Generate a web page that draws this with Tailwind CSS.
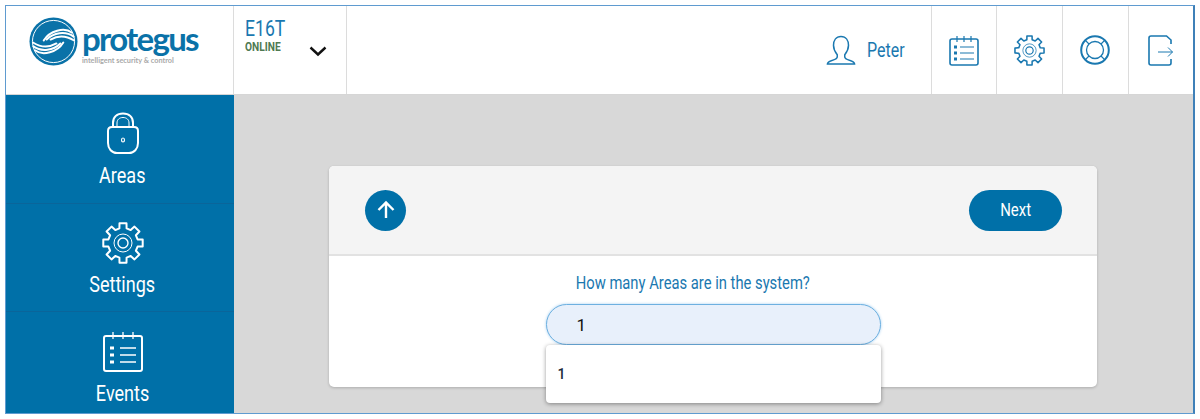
<!DOCTYPE html>
<html lang="en">
<head>
  <meta charset="UTF-8" />
  <title>Protegus - Areas</title>
  <script src="https://cdn.jsdelivr.net/npm/@tailwindcss/browser@4"></script>
</head>
<body class="bg-white w-[1200px] h-[419px] overflow-hidden font-['Roboto',sans-serif]">

<div class="mt-[5px] ml-[5px] w-[1190px] h-[409px] border border-r-2 border-[#5f9bd0] border-r-[#3f80b8] flex flex-col overflow-hidden">

  <!-- header -->
  <header class="h-[89px] shrink-0 flex bg-white border-b border-[#d6d6d6]">
    <div class="w-[228px] shrink-0 border-r border-[#dcdcdc] flex items-start pt-[11px] pl-[23px]">
      <svg class="w-[49px] h-[49px] shrink-0" viewBox="0 0 50 50">
        <circle cx="25" cy="25" r="24.5" fill="#0a72a8" />
        <circle cx="25" cy="25" r="21.5" fill="none" stroke="#fff" stroke-width="1" />
        <g fill="none" stroke="#fff" stroke-linecap="round">
          <path d="M15 24C21 14 36 10 44 16" stroke-width="2" />
          <path d="M18 23C25 16 37 14 45.5 20" stroke-width="2" />
          <path d="M22 23C29 19 38 19 46 24" stroke-width="2" />
          <g transform="rotate(180 25 25)">
            <path d="M15 24C21 14 36 10 44 16" stroke-width="2" />
            <path d="M18 23C25 16 37 14 45.5 20" stroke-width="2" />
            <path d="M22 23C29 19 38 19 46 24" stroke-width="2" />
          </g>
        </g>
      </svg>
      <div class="ml-[4px] mt-[6px]">
        <p class="font-['Lato',sans-serif] font-bold text-[33px] leading-[30px] tracking-[-1.7px] text-[#0a72a8]">protegus</p>
        <p class="font-['Lato',sans-serif] font-bold text-[7.3px] leading-[10px] text-[#a9a9a9] mt-[3px]">intelligent security &amp; control</p>
      </div>
    </div>
    <div class="w-[113px] shrink-0 border-r border-[#dcdcdc] flex pl-[11px] pt-[12px]">
      <div>
        <p class="text-[22px] leading-[21px] text-[#1a78b0] origin-left scale-x-[0.8]">E16T</p>
        <p class="text-[12px] leading-[14px] font-bold text-[#4f7a52] mt-[1px] origin-left scale-x-[0.85]">ONLINE</p>
      </div>
      <svg class="w-[18px] h-[12px] ml-auto mr-[19px] mt-[27px]" viewBox="0 0 18 12" fill="none" stroke="#111" stroke-width="2.4"><path d="M1.5 2.5L9 9.5L16.5 2.5" /></svg>
    </div>
    <div class="flex-1 flex items-center justify-end pr-[26px] gap-[11px]">
      <svg class="w-[30px] h-[30px] mt-[-1px]" viewBox="0 0 32 32" fill="none" stroke="#1a78b0" stroke-width="1.6"><path d="M16 1.5C10.5 1.5 8 6 8 11C8 15 9.5 18 12 21V23.5C12 25 10 26 7 27C3.5 28 1.5 29 1.5 31H30.5C30.5 29 28.5 28 25 27C22 26 20 25 20 23.5V21C22.5 18 24 15 24 11C24 6 21.5 1.5 16 1.5Z" /></svg>
      <p class="text-[20px] leading-none text-[#1a78b0] w-[38px] origin-left scale-x-[0.8]">Peter</p>
    </div>
    <div class="w-[65px] shrink-0 border-l border-[#dcdcdc] flex items-center justify-center">
      <svg class="w-[30px] h-[31px]" viewBox="0 0 30 31" fill="none" stroke="#1a78b0" stroke-width="1.6"><rect x="1" y="4" width="28" height="26" rx="2" /><path d="M8 1V7M15 1V7M22 1V7M11 12H25M11 18H25M11 24H25" stroke-width="1.2" /><path d="M5 12H8M5 18H8M5 24H8" stroke-width="2.8" /></svg>
    </div>
    <div class="w-[66px] shrink-0 border-l border-[#dcdcdc] flex items-center justify-center">
      <svg class="w-[31px] h-[31px]" viewBox="0 0 42 42" fill="none" stroke="#1a78b0" stroke-width="2.1"><path d="M17.5 1.3H24.5L24.6 6.4L28.7 8.1L32.5 4.6L37.4 9.5L33.9 13.3L35.6 17.4L40.7 17.5V24.5L35.6 24.6L33.9 28.7L37.4 32.5L32.5 37.4L28.7 33.9L24.6 35.6L24.5 40.7H17.5L17.4 35.6L13.3 33.9L9.5 37.4L4.6 32.5L8.1 28.7L6.4 24.6L1.3 24.5V17.5L6.4 17.4L8.1 13.3L4.6 9.5L9.5 4.6L13.3 8.1L17.4 6.4Z" stroke-linejoin="round" /><circle cx="21" cy="21" r="9" stroke-width="1" /><circle cx="21" cy="21" r="5" stroke-width="1.6" /></svg>
    </div>
    <div class="w-[66px] shrink-0 border-l border-[#dcdcdc] flex items-center justify-center">
      <svg class="w-[30px] h-[30px] mr-[2px]" viewBox="0 0 30 30" fill="none" stroke="#1a78b0"><circle cx="15" cy="15" r="13.8" stroke-width="2" /><circle cx="15" cy="15" r="8.5" stroke-width="1.3" /><path d="M9 9L5 5M21 9L25 5M9 21L5 25M21 21L25 25" stroke-width="1.1" /></svg>
    </div>
    <div class="w-[65px] shrink-0 border-l border-[#dcdcdc] flex items-center justify-center">
      <svg class="w-[25px] h-[31px] mr-[1px]" viewBox="0 0 25 31" fill="none" stroke="#1a78b0" stroke-width="1.6"><path d="M23 9V5L18.5 1H3C2 1 1 2 1 3V28C1 29 2 30 3 30H21C22 30 23 29 23 28V24" /><path d="M10 17H24.5M20 12.5L24.5 17L20 21.5" stroke-width="1" /></svg>
    </div>
  </header>

  <div class="flex-1 flex min-h-0">
    <!-- sidebar -->
    <nav class="w-[228px] shrink-0 bg-[#0070a8] flex flex-col text-white">
      <a class="h-[108px] shrink-0 flex flex-col items-center pt-[17px] pl-[5px]">
        <svg class="w-[32px] h-[42px]" viewBox="0 0 32 42" fill="none" stroke="#fff" stroke-width="2"><path d="M6 14V11C6 5 10 1.5 16 1.5C22 1.5 26 5 26 11V14" /><path d="M10 14V11C10 7.5 12.5 5.5 16 5.5C19.5 5.5 22 7.5 22 11V14" stroke-width="1" /><path d="M5 15H27C29.5 15 31 16.5 31 19V31C31 37 27 41 22 41H10C5 41 1 37 1 31V19C1 16.5 2.5 15 5 15Z" stroke-linejoin="round" /><ellipse cx="16" cy="28" rx="1.5" ry="2" stroke-width="1.2" /></svg>
        <span class="text-[22px] leading-[24px] mt-[10px] scale-x-[0.82]">Areas</span>
      </a>
      <a class="h-[108px] shrink-0 flex flex-col items-center pt-[18px] pl-[5px] border-t border-[#0a659a]">
        <svg class="w-[42px] h-[42px]" viewBox="0 0 42 42" fill="none" stroke="#fff" stroke-width="2"><path d="M17.5 1.3H24.5L24.6 6.4L28.7 8.1L32.5 4.6L37.4 9.5L33.9 13.3L35.6 17.4L40.7 17.5V24.5L35.6 24.6L33.9 28.7L37.4 32.5L32.5 37.4L28.7 33.9L24.6 35.6L24.5 40.7H17.5L17.4 35.6L13.3 33.9L9.5 37.4L4.6 32.5L8.1 28.7L6.4 24.6L1.3 24.5V17.5L6.4 17.4L8.1 13.3L4.6 9.5L9.5 4.6L13.3 8.1L17.4 6.4Z" stroke-linejoin="round" /><circle cx="21" cy="21" r="9" stroke-width="1" /><circle cx="21" cy="21" r="5" stroke-width="1.4" /></svg>
        <span class="text-[22px] leading-[24px] mt-[9px] scale-x-[0.82]">Settings</span>
      </a>
      <a class="flex-1 flex flex-col items-center pt-[19px] pl-[5px] border-t border-[#0a659a]">
        <svg class="w-[40px] h-[41px]" viewBox="0 0 40 41" fill="none" stroke="#fff" stroke-width="2"><rect x="1" y="5" width="38" height="35" rx="2" /><path d="M10 1V8M20 1V8M30 1V8M17 17H33M17 24H33M17 31H33" stroke-width="1.3" /><path d="M7 17H11M7 24H11M7 31H11" stroke-width="3" /></svg>
        <span class="text-[22px] leading-[24px] mt-[10px] scale-x-[0.82]">Events</span>
      </a>
    </nav>

    <!-- main -->
    <main class="flex-1 bg-[#d8d8d8] pt-[71px] pl-[95px]">
      <section class="w-[768px] h-[221px] bg-white rounded-[5px] shadow-[0_1px_3px_rgba(0,0,0,0.2)]">
        <div class="h-[90px] bg-[#f4f4f4] rounded-t-[5px] border-b-2 border-[#e2e2e2] flex items-center justify-between pl-[36px] pr-[35px]">
          <button class="w-[41px] h-[41px] rounded-full bg-[#0070a8] flex items-center justify-center">
            <svg class="w-[20px] h-[20px]" viewBox="0 0 20 20" fill="none" stroke="#fff" stroke-width="2.4"><path d="M10 18V3M2.5 10L10 2.5L17.5 10" /></svg>
          </button>
          <button class="w-[93px] h-[41px] pb-[1px] rounded-full bg-[#0070a8] text-white text-[18px]"><span class="inline-block scale-x-[0.83]">Next</span></button>
        </div>
        <div class="flex flex-col items-center pt-[16px]">
          <p class="text-[18px] leading-[22px] text-[#1a78b0] whitespace-nowrap scale-x-[0.82] ml-[-40px]">How many Areas are in the system?</p>
          <div class="relative w-[335px] mt-[10px]">
            <input type="text" value="1" readonly class="w-full h-[41px] rounded-full bg-[#e8f0fb] border-[1.5px] border-[#6db0e0] shadow-[0_0_3px_#a5cff0] pl-[30px] text-[17px] text-[#111] outline-none" />
            <div class="absolute top-[41px] left-0 w-full h-[58px] bg-white rounded-[4px] shadow-[0_1px_4px_rgba(0,0,0,0.4)] flex items-center pl-[12px] text-[14px] font-medium text-[#1c2b39]">1</div>
          </div>
        </div>
      </section>
    </main>
  </div>
</div>
</body>
</html>
